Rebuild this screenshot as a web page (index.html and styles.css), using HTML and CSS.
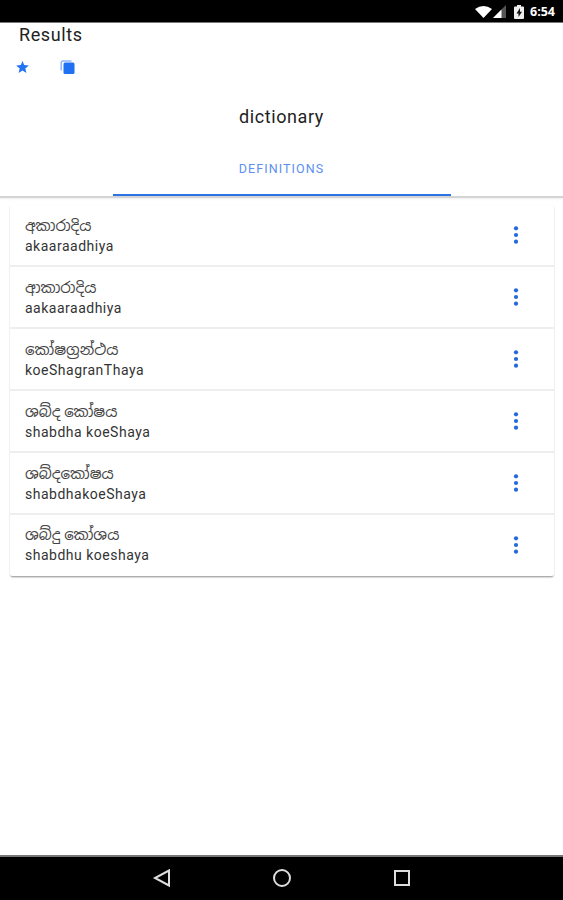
FILE: index.html
```html
<!DOCTYPE html>
<html lang="si">
<head>
<meta charset="utf-8">
<title>Results</title>
<link rel="stylesheet" href="styles.css">
</head>
<body>
<div class="status">
  <svg width="32" height="14" viewBox="0 0 32 14"><path d="M0 4Q8.500-2 17 4L8.500 13Z" fill="#fff"/><path d="M18 13L31 0V13Z" fill="#555"/><path d="M18 13L26.500 4.500V13Z" fill="#fff"/></svg>
  <svg class="battery" width="10" height="14" viewBox="0 0 10 14"><path d="M3 0h4v1.500h2q1 0 1 1V13q0 1-1 1H1q-1 0-1-1V2.500q0-1 1-1h2z" fill="#eee"/><path d="M6 3L2.500 8.500h2V12L8 6.700H6z" fill="#111"/></svg>
  <span>6:54</span>
</div>
<header>
  <h1>Results</h1>
  <div class="tools">
    <svg width="13" height="12" viewBox="0 0 13 12"><path d="M6.500 0L8.200 4.100 12.800 4.500 9.300 7.400 10.400 12 6.500 9.500 2.600 12 3.700 7.400.2 4.500 4.800 4.100Z" fill="#2474f2"/></svg>
    <svg class="copy" width="15" height="15" viewBox="0 0 15 15"><path d="M1.200 10.500V3q0-2 2-2h8.300" fill="none" stroke="#8db6fc" stroke-width="1.500"/><rect x="3.500" y="2.500" width="11" height="11.500" rx="1.500" fill="#1f70f2"/></svg>
  </div>
</header>
<h2>dictionary</h2>
<nav><div class="tab">DEFINITIONS</div></nav>
<main>
  <div class="row"><div><p class="si">අකාරාදිය</p><p>akaaraadhiya</p></div><svg class="more" width="6" height="20"><use href="#dots"/></svg></div>
  <div class="row"><div><p class="si">ආකාරාදිය</p><p>aakaaraadhiya</p></div><svg class="more" width="6" height="20"><use href="#dots"/></svg></div>
  <div class="row"><div><p class="si">කෝෂග්‍රන්ථය</p><p>koeShagranThaya</p></div><svg class="more" width="6" height="20"><use href="#dots"/></svg></div>
  <div class="row"><div><p class="si">ශබ්ද කෝෂය</p><p>shabdha koeShaya</p></div><svg class="more" width="6" height="20"><use href="#dots"/></svg></div>
  <div class="row"><div><p class="si">ශබ්දකෝෂය</p><p>shabdhakoeShaya</p></div><svg class="more" width="6" height="20"><use href="#dots"/></svg></div>
  <div class="row"><div><p class="si">ශබ්දු කෝශය</p><p>shabdhu koeshaya</p></div><svg class="more" width="6" height="20"><use href="#dots"/></svg></div>
</main>
<footer>
  <svg width="260" height="20" viewBox="0 0 260 20" fill="none" stroke="#ddd" stroke-width="2"><path d="M17 2.500V17.500L3 10Z"/><circle cx="130" cy="10" r="8"/><rect x="243" y="3" width="14" height="14"/></svg>
</footer>
<svg class="defs" width="0" height="0"><defs><g id="dots" fill="#2368dc"><circle cx="3" cy="3.300" r="2.100"/><circle cx="3" cy="10" r="2.100"/><circle cx="3" cy="16.700" r="2.100"/></g></defs></svg>
</body>
</html>
```
FILE: styles.css
```css
* { box-sizing: border-box; }
body { margin: 0; height: 900px; display: flex; flex-direction: column; position: relative; overflow: hidden; background: #fff; color: #222; font-family: Roboto, "Noto Sans Sinhala", "Noto Sans", sans-serif; }
h1, h2, p { margin: 0; font-weight: 400; }
svg { display: block; flex: none; }
.status { height: 23px; background: #000; border-bottom: 1px solid #777; color: #fff; display: flex; align-items: center; justify-content: flex-end; padding: 2px 8px 0 0; font: 700 12.500px/20px "Open Sans", sans-serif; }
.battery { margin: 0 6px 0 7px; }
header { height: 67px; padding: 0 16px; }
h1 { font-size: 18px; line-height: 24px; letter-spacing: .6px; padding-left: 3px; }
.tools { display: flex; align-items: center; height: 40px; }
.copy { margin-left: 31px; }
h2 { height: 54px; text-align: center; font-size: 18px; line-height: 54px; letter-spacing: .6px; }
nav { height: 54px; display: flex; justify-content: center; border-bottom: 2px solid #d4d4d4; box-shadow: 0 1px 2px #eee; }
.tab { width: 338px; height: 52px; border-bottom: 2px solid #2c74e4; text-align: center; font-size: 12.500px; line-height: 49px; letter-spacing: 1.100px; color: #5d8ff0; }
main { margin: 7px 9px 0 10px; height: 371px; border-radius: 2px; box-shadow: 0 2px 2px -1px #999, 0 1px 2px #ddd; }
.row { height: 62px; display: flex; align-items: center; justify-content: space-between; padding: 0 35px 0 15px; border-bottom: 2px solid #eee; }
.row:last-child { height: 61px; padding-bottom: 2px; border-bottom: 0; }
.row p { font-size: 14px; line-height: 20px; letter-spacing: .5px; color: #333; white-space: nowrap; }
.row .si { font-size: 15px; letter-spacing: 0; color: #444; }
.row > div { padding-top: 2px; }
.row:last-child > div { padding-top: 1px; }
footer { margin-top: auto; height: 45px; background: #000; border-top: 2px solid #777; display: flex; align-items: center; justify-content: center; padding-bottom: 1px; }
.defs { position: absolute; }
```
